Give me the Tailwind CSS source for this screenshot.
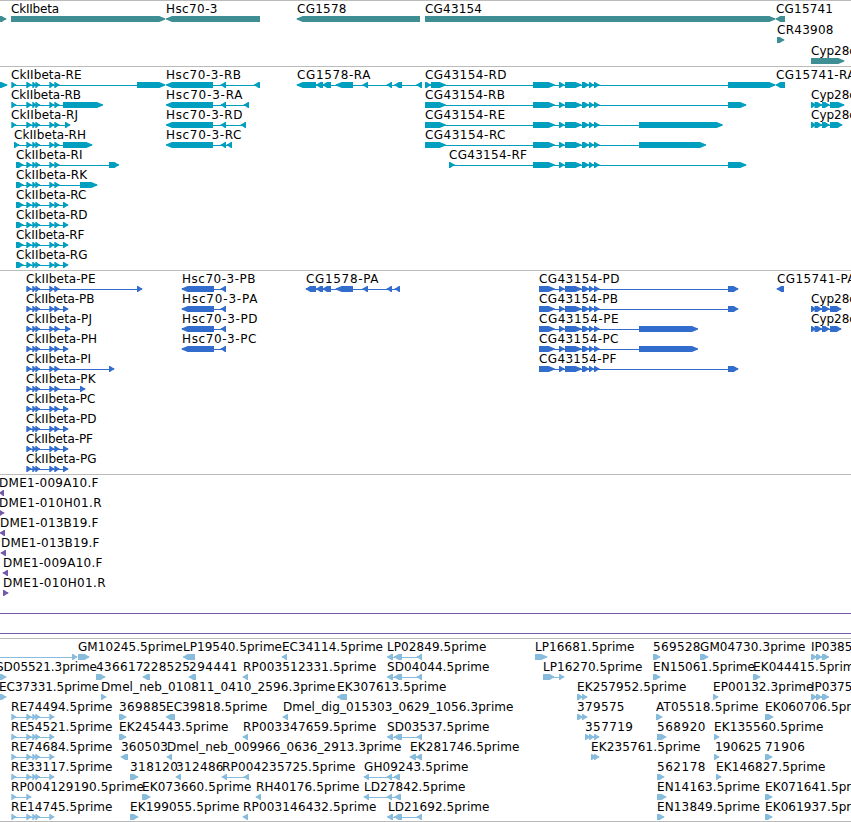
<!DOCTYPE html>
<html lang="en">
<head>
    <meta charset="UTF-8">
    <meta name="viewport" content="width=device-width, initial-scale=1.0">
    <title>Genome Browser</title>
    <script src="https://cdn.jsdelivr.net/npm/@tailwindcss/browser@4"></script>
</head>
<body class="bg-white text-black overflow-hidden">
<main class="flex flex-col w-[851px] h-[822px] overflow-hidden font-['DejaVu_Sans',sans-serif] text-[12px]">
    <section class="h-[66px] border-t border-[#bbbbbb] text-[#3e8e94]"><svg id="genes" class="block w-full h-full"></svg></section>
    <section class="h-[204px] border-t border-[#bbbbbb] text-[#009fc0]"><svg id="transcripts" class="block w-full h-full"></svg></section>
    <section class="h-[204px] border-t border-[#bbbbbb] text-[#326ccc]"><svg id="proteins" class="block w-full h-full"></svg></section>
    <section class="h-[164px] border-t border-[#bbbbbb] text-[#7459a6]"><svg id="clones" class="block w-full h-full"></svg></section>
    <section class="h-[184px] border-y border-[#bbbbbb] text-[#87bcdd]"><svg id="ests" class="block w-full h-full"></svg></section>
</main>

<script>
    const NS = "http://www.w3.org/2000/svg";

    // Exons shared by the isoforms of one gene
    const CK = [[26.3, 31.7], [32.3, 36.5], [35.3, 40], [49.3, 54.3], [54.3, 59.5]];
    const CKP = [[26.3, 31.7], ...CK.slice(1)];
    const CG = [[559, 564.5], [565, 581.5], [582, 589], [589, 594], [594, 599.5]];
    const CGR = [[533, 554.7], ...CG];
    const CGP = [[539, 554.7], ...CG];
    const CYP = [[811, 816], [814.5, 822], [822, 829.5], [830, 836]];
    const RE = [[11.3, 16.3], [26.3, 31.7], [32.3, 36.5], [35.3, 40], [49.3, 54.3]];
    const SD = [[387, 393], [394, 402], [416.7, 422]];
    const IP = [[811, 817], [816, 822], [822, 829]];

    // [row, label, label x, strand, exons, label end]
    const genes = [
        [0, "", 0, 1, [[-5, 6.3]]],
        [0, "CkIIbeta", 11, 1, [[11, 165.3]], 59],
        [0, "Hsc70-3", 166, -1, [[166, 260]], 217.5],
        [0, "CG1578", 297, -1, [[296.7, 420]], 346.5],
        [0, "CG43154", 425, 1, [[425, 775.3]], 482],
        [0, "CG15741", 776, -1, [[775.7, 785]], 833],
        [1, "CR43908", 777, 1, [[777, 784.3]], 833.5],
        [2, "Cyp28c1", 811, 1, [[811, 844.3]]]
    ];

    const transcripts = [
        [0, "", 0, 1, [[-5, 7.3]]],
        [0, "CkIIbeta-RE", 11, 1, [[11.3, 16.3], ...CK, [137, 165.3]], 81.5],
        [1, "CkIIbeta-RB", 11, 1, [[11.3, 16.3], ...CK, [63, 103]], 81],
        [2, "CkIIbeta-RJ", 11, 1, [[11.3, 16.3], ...CK, [65, 70.3]], 78],
        [3, "CkIIbeta-RH", 14, 1, [[14, 19.3], ...CK, [63, 92.3]], 86],
        [4, "CkIIbeta-RI", 16, 1, [[16, 23.5], ...CK, [109, 119]], 82.5],
        [5, "CkIIbeta-RK", 16, 1, [[16, 23.5], ...CK, [80, 97.3]], 87],
        [6, "CkIIbeta-RC", 16, 1, [[16, 23.5], ...CK, [63, 68.3]], 86.5],
        [7, "CkIIbeta-RD", 16, 1, [[16, 23.5], ...CK, [63, 68.3]], 87.5],
        [8, "CkIIbeta-RF", 16, 1, [[16, 23.5], ...CK, [63, 68.3]], 84.5],
        [9, "CkIIbeta-RG", 16, 1, [[16, 23.5], ...CK, [63, 68.3]], 87.5],
        [0, "Hsc70-3-RB", 166, -1, [[166, 213], [220.7, 226], [254, 260]], 241],
        [1, "Hsc70-3-RA", 166, -1, [[166, 213], [220.7, 226], [243.7, 249]], 242.5],
        [2, "Hsc70-3-RD", 166, -1, [[166, 213], [220.7, 226], [240.7, 246]], 242.5],
        [3, "Hsc70-3-RC", 166, -1, [[166, 213], [220.7, 226], [226.7, 232]], 241.5],
        [0, "CG1578-RA", 297, -1, [[296.7, 316], [316, 323], [322.5, 331], [335.7, 353], [362.5, 368], [386.7, 392], [394.3, 402], [416.3, 422]], 370.5],
        [0, "CG43154-RD", 425, 1, [[425, 431], [431, 445.7], ...CGR, [728, 775.3]], 506.5],
        [1, "CG43154-RB", 425, 1, [[425, 445.7], ...CGR, [728, 746.3]], 505],
        [2, "CG43154-RE", 425, 1, [[425, 445.7], ...CGR, [639, 722.7]], 505],
        [3, "CG43154-RC", 425, 1, [[425, 445.7], ...CGR, [639, 706]], 505.5],
        [4, "CG43154-RF", 449, 1, [[449, 454.7], ...CGR, [728, 746.3]], 527],
        [0, "CG15741-RA", 776, -1, [[775.7, 785]], 855.5],
        [1, "Cyp28c1-RA", 811, 1, [...CYP, [832, 844.3]]],
        [2, "Cyp28c1-RB", 811, 1, [...CYP, [832, 842.3]]]
    ];

    const proteins = [
        [0, "CkIIbeta-PE", 26, 1, [...CKP, [137, 142.3]], 95.5],
        [1, "CkIIbeta-PB", 26, 1, [...CKP, [63, 68.3]], 94.5],
        [2, "CkIIbeta-PJ", 26, 1, [...CKP, [65, 70.3]], 92],
        [3, "CkIIbeta-PH", 26, 1, [...CKP, [63, 68.3]], 97],
        [4, "CkIIbeta-PI", 26, 1, [...CKP, [109, 114.3]], 91],
        [5, "CkIIbeta-PK", 26, 1, [...CKP, [80, 85.3]], 95.5],
        [6, "CkIIbeta-PC", 26, 1, [...CKP, [63, 68.3]], 95.5],
        [7, "CkIIbeta-PD", 26, 1, [...CKP, [63, 68.3]], 96.5],
        [8, "CkIIbeta-PF", 26, 1, [...CKP, [63, 68.3]], 93],
        [9, "CkIIbeta-PG", 26, 1, [...CKP, [63, 68.3]], 96.5],
        [0, "Hsc70-3-PB", 182, -1, [[181.7, 214], [220.7, 226]], 255.5],
        [1, "Hsc70-3-PA", 182, -1, [[181.7, 214], [220.7, 226]], 257.5],
        [2, "Hsc70-3-PD", 182, -1, [[181.7, 214], [220.7, 226]], 257.5],
        [3, "Hsc70-3-PC", 182, -1, [[181.7, 214], [220.7, 226]], 256.5],
        [0, "CG1578-PA", 306, -1, [[305.7, 316], [316, 323], [322.5, 331], [335.7, 353], [362.5, 368], [386.7, 392], [394.7, 400]], 378.5],
        [0, "CG43154-PD", 539, 1, [...CGP, [728, 738.3]], 619.5],
        [1, "CG43154-PB", 539, 1, [...CGP, [728, 738.3]], 618],
        [2, "CG43154-PE", 539, 1, [...CGP, [639, 698]], 618.5],
        [3, "CG43154-PC", 539, 1, [...CGP, [639, 698]], 618.5],
        [4, "CG43154-PF", 539, 1, [...CGP, [728, 738.3]], 616.5],
        [0, "CG15741-PA", 777, -1, [[776.7, 784]], 855.5],
        [1, "Cyp28c1-PA", 811, 1, [...CYP, [832, 841.3]]],
        [2, "Cyp28c1-PB", 811, 1, [...CYP, [832, 841.3]]]
    ];

    const clones = [
        [0, "DME1-009A10.F", -1, -1, [[-1, 4]], 98.5],
        [1, "DME1-010H01.R", -1, 1, [[-1, 4.3]], 101.5],
        [2, "DME1-013B19.F", 0, -1, [[-0.3, 5]], 98.5],
        [3, "DME1-013B19.F", 1, -1, [[0.7, 6]], 99.5],
        [4, "DME1-009A10.F", 3, -1, [[2.7, 8]], 102.5],
        [5, "DME1-010H01.R", 3, 1, [[3, 8.3]], 105.5],
        [6, "", 0, 1, [[-20, -10], [870, 880]]],
        [7, "", 0, 1, [[-20, -10], [870, 880]]]
    ];

    const ests = [
        [0, "", 0, 1, [[-20, -10], [72, 77.3]]],
        [0, "GM10245.5prime", 78, 1, [[78, 89.3]], 183],
        [0, "LP19540.5prime", 183, -1, [[183, 195]], 282],
        [0, "EC34114.5prime", 282, -1, [[281.7, 287]], 383],
        [0, "LP02849.5prime", 387, -1, SD, 486.5],
        [0, "LP16681.5prime", 535, 1, [[535, 547.3]], 634.5],
        [0, "569528", 653, 1, [[653, 660.3]], 700.5],
        [0, "GM04730.3prime", 700, 1, [[700, 708.3]], 805.5],
        [0, "IP03852.5prime", 811, 1, IP],
        [1, "SD05521.3prime", -4, 1, [[-5, 6.3]], 97],
        [1, "436617", 96, 1, [[96, 105.3]], 143.5],
        [1, "228525", 143, -1, [[142.7, 150]], 190],
        [1, "294441", 189, -1, [[188.7, 196]], 237.5],
        [1, "RP003512331.5prime", 243, -1, [[242.7, 248]], 376.5],
        [1, "SD04044.5prime", 387, -1, SD, 489.5],
        [1, "LP16270.5prime", 543, 1, [[543, 554.3], [559, 564.3]], 642.5],
        [1, "EN15061.5prime", 653, 1, [[653, 660.3]], 755],
        [1, "EK044415.5prime", 753, 1, [[753, 760.3]], 862],
        [2, "EC37331.5prime", -1, 1, [[-5, 6.3]], 99],
        [2, "Dmel_neb_010811_0410_2596.3prime", 101, 1, [[101, 106.3]], 335.5],
        [2, "EK307613.5prime", 337, -1, [[337, 347]], 446.5],
        [2, "EK257952.5prime", 577, 1, [[577, 583], [582, 587.3]], 686.5],
        [2, "EP00132.3prime", 713, 1, [[713, 718.3]], 813.5],
        [2, "IP03757.5prime", 811, 1, IP],
        [3, "RE74494.5prime", 11, 1, RE, 112.5],
        [3, "369885", 119, 1, [[119, 126.3]], 166.5],
        [3, "EC39818.5prime", 166, -1, [[166, 175]], 267.5],
        [3, "Dmel_dig_015303_0629_1056.3prime", 283, -1, [[282.7, 288]], 513.5],
        [3, "379575", 577, 1, [[577, 583], [582, 587.3]], 624.5],
        [3, "AT05518.5prime", 656, 1, [[656, 662.3]], 758.5],
        [3, "EK060706.5prime", 765, 1, [[765, 773.3]], 874],
        [4, "RE54521.5prime", 11, 1, RE, 112.5],
        [4, "EK245443.5prime", 119, 1, [[119, 126.3]], 228.5],
        [4, "RP003347659.5prime", 243, -1, [[242.7, 248]], 376.5],
        [4, "SD03537.5prime", 387, -1, SD, 489.5],
        [4, "357719", 585, 1, [[585, 590.3], [589, 594.3], [594, 599.3]], 633],
        [4, "568920", 657, 1, [[657, 666.3]], 705.5],
        [4, "EK135560.5prime", 714, 1, [[714, 719.3]], 823.5],
        [5, "RE74684.5prime", 11, 1, RE, 112.5],
        [5, "360503", 121, -1, [[120.7, 128]], 168],
        [5, "Dmel_neb_009966_0636_2913.3prime", 167, -1, [[166.7, 172]], 401.5],
        [5, "EK281746.5prime", 410, -1, [[409.7, 416], [416, 422]], 519.5],
        [5, "EK235761.5prime", 591, 1, [[591, 596.3], [594, 599.3]], 700.5],
        [5, "190625", 715, 1, [[714, 719.3]], 761.5],
        [5, "71906", 765, 1, [[765, 772.3]], 805],
        [6, "RE33117.5prime", 11, 1, RE, 112.5],
        [6, "318120", 130, 1, [[130, 138.3]], 178],
        [6, "312486", 176, -1, [[175.7, 181]], 223.5],
        [6, "RP004235725.5prime", 222, -1, [[221.7, 227], [243.7, 249]], 355.5],
        [6, "GH09243.5prime", 364, -1, [[363.7, 369], [386.7, 392], [393.7, 400]], 468.5],
        [6, "562178", 657, 1, [[657, 664.3]], 705.5],
        [6, "EK146827.5prime", 716, 1, [[716, 721.3]], 825.5],
        [7, "RP004129190.5prime", 11, 1, [[11.3, 16.3], [26.3, 31.3]], 144],
        [7, "EK073660.5prime", 142, 1, [[142, 150.3]], 251.5],
        [7, "RH40176.5prime", 256, -1, [[255.7, 261]], 359.5],
        [7, "LD27842.5prime", 364, -1, [[363.7, 369], [386.7, 392], [394.7, 401]], 465.5],
        [7, "EN14163.5prime", 657, 1, [[657, 666.3]], 760],
        [7, "EK071641.5prime", 765, 1, [[765, 772.3]], 874],
        [8, "RE14745.5prime", 11, 1, RE, 112.5],
        [8, "EK199055.5prime", 130, 1, [[130, 138.3]], 239.5],
        [8, "RP003146432.5prime", 243, -1, [[242.7, 248]], 376.5],
        [8, "LD21692.5prime", 388, -1, SD, 489.5],
        [8, "EN13849.5prime", 657, 1, [[657, 664.3]], 760],
        [8, "EK061937.5prime", 765, 1, [[765, 772.3]], 874]
    ];

    function add(svg, tag, attrs) {
        const el = document.createElementNS(NS, tag);
        for (const key in attrs) el.setAttribute(key, attrs[key]);
        svg.appendChild(el);
        return el;
    }

    function drawTrack(id, features, pitch) {
        const svg = document.getElementById(id);
        for (const [row, label, labelX, strand, exons, labelEnd] of features) {
            const top = row * pitch + 15;
            const start = exons[0][0];
            const end = exons[exons.length - 1][1];
            // intron line
            if (exons.length > 1) {
                add(svg, "rect", { x: start + 1, y: top + 3, width: end - start - 2, height: 1, fill: "currentColor" });
            }
            for (const [a, b] of exons) {
                const head = Math.min(b - a > 12 ? 6 : 4.5, b - a - 1);
                const tip = strand > 0 ? b : a;
                const tail = strand > 0 ? a : b;
                const points = [
                    [tail, top],
                    [tip - strand * head, top],
                    [tip - strand * 1.2, top + 2],
                    [tip, top + 2.3],
                    [tip, top + 3.4],
                    [tip - strand * 1.8, top + 4.2],
                    [tip - strand * head, top + 6],
                    [tail, top + 6]
                ];
                add(svg, "polygon", { points: points.join(" "), fill: "currentColor" });
            }
            if (label) {
                const text = add(svg, "text", { x: labelX, y: row * pitch + 12, class: "fill-black" });
                text.textContent = label;
                if (labelEnd) text.setAttribute("textLength", labelEnd - labelX);
            }
        }
    }

    drawTrack("genes", genes, 21);
    drawTrack("transcripts", transcripts, 20);
    drawTrack("proteins", proteins, 20);
    drawTrack("clones", clones, 20);
    drawTrack("ests", ests, 20);
</script>
</body>
</html>
